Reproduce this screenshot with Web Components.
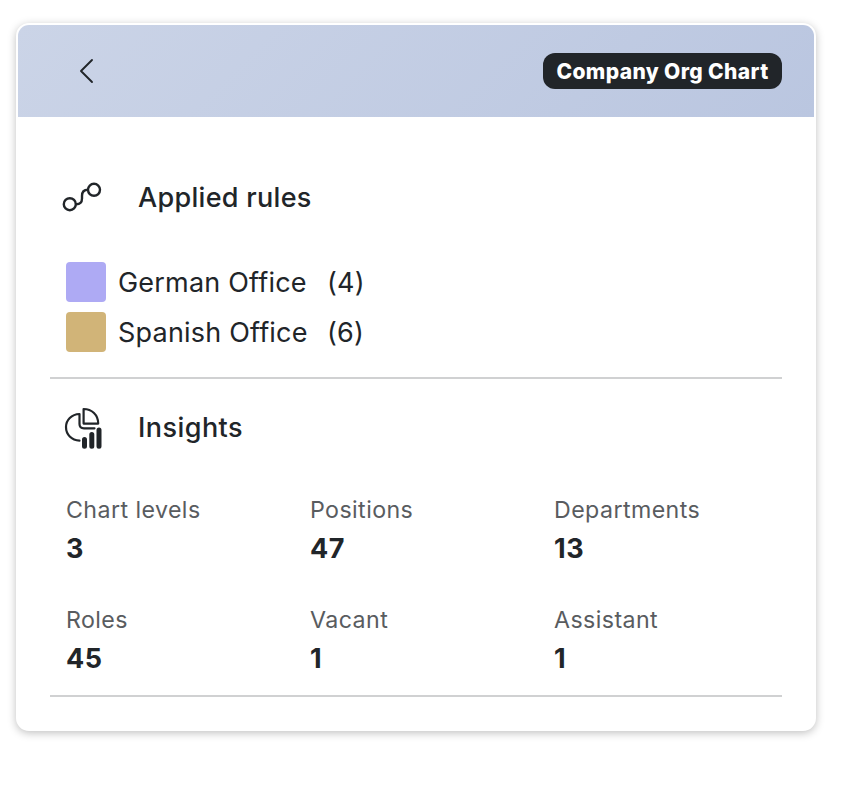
<!DOCTYPE html>
<html lang="en">
<head>
<meta charset="utf-8">
<title>Company Org Chart</title>
<style>
    body {
        box-sizing: border-box;
        min-height: 100vh;
        margin: 0;
        padding: 23px 25px 0 16px;
        background: #fff;
        color: #212529;
        font-family: Inter, "Liberation Sans", sans-serif;
    }
</style>
</head>
<body>
<chart-card>
    <card-header slot="header">Company Org Chart</card-header>
    <card-section heading="Applied rules">
        <rules-icon slot="icon"></rules-icon>
        <rule-list>
            <rule-item count="4" style="--swatch: #aeaaf4">German Office</rule-item>
            <rule-item count="6" style="--swatch: #d1b478">Spanish Office</rule-item>
        </rule-list>
    </card-section>
    <card-section heading="Insights" class="insights">
        <insights-icon slot="icon"></insights-icon>
        <stat-grid>
            <stat-item value="3">Chart levels</stat-item>
            <stat-item value="47">Positions</stat-item>
            <stat-item value="13">Departments</stat-item>
            <stat-item value="45">Roles</stat-item>
            <stat-item value="1">Vacant</stat-item>
            <stat-item value="1">Assistant</stat-item>
        </stat-grid>
    </card-section>
</chart-card>

<script>
class ChartCard extends HTMLElement {
    constructor() {
        super();
        this.attachShadow({ mode: 'open' });
    }

    connectedCallback() {
        this.shadowRoot.innerHTML = `
            <style>
                :host {
                    display: block;
                    box-sizing: border-box;
                    width: 800px;
                    height: 708px;
                    border: 2px solid #fff;
                    border-radius: 13px;
                    background: #fff;
                    box-shadow: 0 2px 8px rgba(0, 0, 0, 0.25);
                }
                main {
                    padding: 50px 32px 0;
                }
            </style>
            <slot name="header"></slot>
            <main><slot></slot></main>
        `;
    }
}

class CardHeader extends HTMLElement {
    constructor() {
        super();
        this.attachShadow({ mode: 'open' });
    }

    connectedCallback() {
        this.shadowRoot.innerHTML = `
            <style>
                :host {
                    display: flex;
                    justify-content: space-between;
                    align-items: center;
                    box-sizing: border-box;
                    height: 92px;
                    padding: 0 32px 0 52px;
                    border-radius: 11px 11px 0 0;
                    background: linear-gradient(135deg, #cbd4e7, #bac6e0);
                }
                button {
                    display: flex;
                    padding: 0;
                    border: 0;
                    background: none;
                    color: #212529;
                }
                .badge {
                    box-sizing: border-box;
                    width: 239px;
                    height: 36px;
                    border-radius: 12px;
                    background: #212529;
                    color: #fff;
                    font-size: 21px;
                    font-weight: 800;
                    line-height: 37px;
                    text-align: center;
                    white-space: nowrap;
                    letter-spacing: 0.38px;
                }
            </style>
            <button aria-label="Back">
                <svg width="32" height="32" viewBox="0 0 32 32" fill="none" stroke="currentColor" stroke-width="1.9" stroke-linecap="round" stroke-linejoin="round">
                    <path d="M22 5 11 16 22 27"/>
                </svg>
            </button>
            <span class="badge"><slot></slot></span>
        `;
    }
}

class CardSection extends HTMLElement {
    constructor() {
        super();
        this.attachShadow({ mode: 'open' });
    }

    connectedCallback() {
        this.shadowRoot.innerHTML = `
            <style>
                :host {
                    display: block;
                    border-bottom: 2px solid #d0d1d2;
                }
                header {
                    display: flex;
                    align-items: center;
                    gap: 36px;
                    height: 60px;
                    padding-left: 12px;
                }
                h2 {
                    margin: 0;
                    padding-top: 2px;
                    font-size: 27px;
                    font-weight: 500;
                    line-height: 40px;
                    letter-spacing: 0.3px;
                }
                :host(.insights) header {
                    height: 98px;
                }
                :host(.insights) h2 {
                    padding-top: 0;
                    letter-spacing: 0.45px;
                }
            </style>
            <header>
                <slot name="icon"></slot>
                <h2>${this.getAttribute('heading')}</h2>
            </header>
            <slot></slot>
        `;
    }
}

class RulesIcon extends HTMLElement {
    constructor() {
        super();
        this.attachShadow({ mode: 'open' });
    }

    connectedCallback() {
        this.shadowRoot.innerHTML = `
            <style>
                :host { display: block; width: 40px; height: 40px; }
                svg { display: block; }
            </style>
            <svg width="40" height="40" viewBox="0 0 40 40" fill="none" stroke="currentColor" stroke-width="2.4">
                <circle cx="7.8" cy="27.2" r="6"/>
                <circle cx="32" cy="12.8" r="6"/>
                <path d="M13.8 27.2C18 27.4 20 25.5 20 21.5V19C20 15 22 12.8 26 12.8"/>
            </svg>
        `;
    }
}

class InsightsIcon extends HTMLElement {
    constructor() {
        super();
        this.attachShadow({ mode: 'open' });
    }

    connectedCallback() {
        this.shadowRoot.innerHTML = `
            <style>
                :host { display: block; width: 40px; height: 44px; }
                svg { display: block; }
            </style>
            <svg width="40" height="44" viewBox="0 0 40 44" fill="none" stroke="currentColor" stroke-width="2.2">
                <path d="M21.6 3V17.6H36.2C36.2 9 29.8 3 21.6 3Z" stroke-linejoin="round"/>
                <path d="M32.5 22.3H22Q17.5 22.3 17.5 18V8C9.5 8.2 4 14.2 4 21.1C4 28.6 9.5 34.4 17.5 34.6" stroke-linecap="round" stroke-linejoin="round"/>
                <path d="M22.5 33.4V40.2M29.8 28.4V40.2M37 24V40.2" stroke-width="5" stroke-linecap="round"/>
            </svg>
        `;
    }
}

class RuleList extends HTMLElement {
    constructor() {
        super();
        this.attachShadow({ mode: 'open' });
    }

    connectedCallback() {
        this.shadowRoot.innerHTML = `
            <style>
                :host {
                    display: flex;
                    flex-direction: column;
                    gap: 10px;
                    padding: 35px 16px 25px;
                }
            </style>
            <slot></slot>
        `;
    }
}

class RuleItem extends HTMLElement {
    constructor() {
        super();
        this.attachShadow({ mode: 'open' });
    }

    connectedCallback() {
        this.shadowRoot.innerHTML = `
            <style>
                :host {
                    display: flex;
                    height: 40px;
                    font-size: 27px;
                    line-height: 41px;
                    letter-spacing: 0.2px;
                }
                i {
                    width: 40px;
                    margin-right: 12px;
                    border-radius: 4px;
                    background: var(--swatch);
                }
                .name {
                    width: 209px;
                }
            </style>
            <i></i>
            <span class="name"><slot></slot></span>
            <span>(${this.getAttribute('count')})</span>
        `;
    }
}

class StatGrid extends HTMLElement {
    constructor() {
        super();
        this.attachShadow({ mode: 'open' });
    }

    connectedCallback() {
        this.shadowRoot.innerHTML = `
            <style>
                :host {
                    display: grid;
                    grid-template-columns: repeat(3, 244px);
                    row-gap: 34px;
                    padding: 15px 0 17px 16px;
                    margin-right: -16px;
                }
            </style>
            <slot></slot>
        `;
    }
}

class StatItem extends HTMLElement {
    constructor() {
        super();
        this.attachShadow({ mode: 'open' });
    }

    connectedCallback() {
        this.shadowRoot.innerHTML = `
            <style>
                :host {
                    display: flex;
                    flex-direction: column;
                    height: 76px;
                }
                span {
                    color: #595c5f;
                    font-size: 23.2px;
                    line-height: 37px;
                    letter-spacing: 0.42px;
                }
                strong {
                    font-size: 27px;
                    font-weight: 700;
                    line-height: 40px;
                    letter-spacing: 0.6px;
                }
            </style>
            <span><slot></slot></span>
            <strong>${this.getAttribute('value')}</strong>
        `;
    }
}

customElements.define('chart-card', ChartCard);
customElements.define('card-header', CardHeader);
customElements.define('card-section', CardSection);
customElements.define('rules-icon', RulesIcon);
customElements.define('insights-icon', InsightsIcon);
customElements.define('rule-list', RuleList);
customElements.define('rule-item', RuleItem);
customElements.define('stat-grid', StatGrid);
customElements.define('stat-item', StatItem);
</script>
</body>
</html>
